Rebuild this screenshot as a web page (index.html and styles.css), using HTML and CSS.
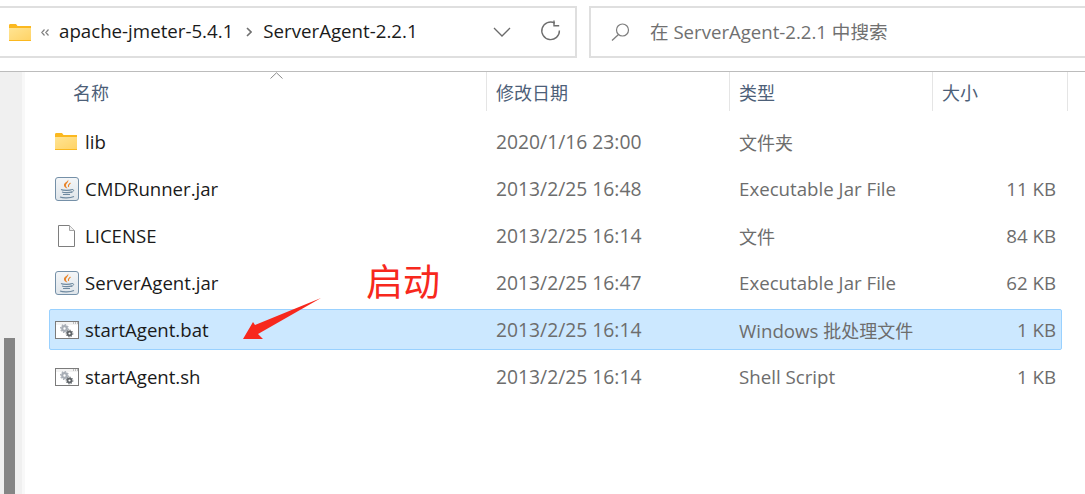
FILE: index.html
```html
<!DOCTYPE html>
<html>
<head>
    <title>ServerAgent-2.2.1</title>
    <link rel="stylesheet" href="styles.css">
</head>
<body>
    <svg class="defs" width="0" height="0">
        <defs>
            <linearGradient id="folder-fill" x1="0" y1="0" x2="1" y2="1">
                <stop offset="0" stop-color="#ffe493"/>
                <stop offset="1" stop-color="#ffd366"/>
            </linearGradient>
            <linearGradient id="jar-fill" x1="0" y1="0" x2="0" y2="1">
                <stop offset="0" stop-color="#f4f6f8"/>
                <stop offset="1" stop-color="#dfe5ea"/>
            </linearGradient>
            <symbol id="folder" viewBox="0 0 22 17">
                <path d="M0 1.500C0 .7.500 0 1.300 0H7l1.500 2H22v15H0z" fill="#fbb81f"/>
                <path d="M0 4h22v12H0z" fill="url(#folder-fill)"/>
            </symbol>
            <symbol id="jar" viewBox="0 0 24 24">
                <rect x=".5" y=".5" width="23" height="23" rx="2.500" fill="url(#jar-fill)" stroke="#7590a8"/>
                <path d="M13 2.500c1.500 2.500-2.500 4-2 6.500.2 1 1 1.700 1.500 2.500-2.200-.5-4-2-3.500-4 .5-2 4.200-2.800 4-5z" fill="#e8842a"/>
                <path d="M15.500 6c-1.200 1-2.800 1.800-2 4" fill="none" stroke="#e8842a" stroke-width="1.200"/>
                <path d="M6 12.500c2 1.200 9 1.200 11 0M7 15c2 .8 8 .8 10-.3M8 17.500h7M5 20c3 1.200 10 1.200 14-.5" fill="none" stroke="#6f8aa0" stroke-width="1.200"/>
                <path d="M17 12.500c2.200-.3 2.500 2-1 3" fill="none" stroke="#6f8aa0"/>
            </symbol>
            <symbol id="script" viewBox="0 0 24 18">
                <rect x=".5" y=".5" width="23" height="17" fill="#fff" stroke="#7b7b7b"/>
                <path d="M1 1h22v3H1z" fill="#f3f3f3"/>
                <path d="M18 2h1M20 2h1M22 2h1" stroke="#8a8a8a"/>
                <circle cx="9.500" cy="7.500" r="2.300" fill="none" stroke="#a7adb5" stroke-width="2.200"/>
                <circle cx="9.500" cy="7.500" r="3.900" fill="none" stroke="#a7adb5" stroke-width="1.200" stroke-dasharray="1.500 1.500"/>
                <circle cx="14.500" cy="12.500" r="2" fill="none" stroke="#5f6468" stroke-width="1.800"/>
                <circle cx="14.500" cy="12.500" r="3.400" fill="none" stroke="#5f6468" stroke-width="1" stroke-dasharray="1.300 1.300"/>
            </symbol>
        </defs>
    </svg>

    <div class="toolbar">
        <div class="address">
            <svg class="address-folder" width="22" height="17"><use href="#folder"/></svg>
            <svg class="crumb-more" width="8" height="7" viewBox="0 0 8 7">
                <path d="M3.500.5L.8 3.500l2.700 3M7.500.5L4.800 3.500l2.700 3" fill="none" stroke="#808080" stroke-width="1.200"/>
            </svg>
            <span class="crumb">apache-jmeter-5.4.1</span>
            <svg class="crumb-sep" width="6" height="10" viewBox="0 0 6 10">
                <path d="M1 1l4 4-4 4" fill="none" stroke="#707070" stroke-width="1.600"/>
            </svg>
            <span class="crumb">ServerAgent-2.2.1</span>
            <svg class="history" width="18" height="10" viewBox="0 0 18 10">
                <path d="M1 1l8 8 8-8" fill="none" stroke="#6a6a6a" stroke-width="1.300"/>
            </svg>
            <svg class="reload" width="21" height="21" viewBox="0 0 21 21">
                <path d="M14.800 3.100A8.800 8.800 0 1 0 19.400 10.500" fill="none" stroke="#6e6e6e" stroke-width="1.400"/>
                <path d="M14 .5v5.200h5.200" fill="none" stroke="#6e6e6e" stroke-width="1.400"/>
            </svg>
        </div>
        <div class="search">
            <svg class="search-icon" width="19" height="18" viewBox="0 0 19 18">
                <circle cx="11.500" cy="7" r="6" fill="none" stroke="#7d7d7d" stroke-width="1.200"/>
                <path d="M7.500 11.500L1 17.500" stroke="#7d7d7d" stroke-width="1.300"/>
            </svg>
            <span class="search-text">在 ServerAgent-2.2.1 中搜索</span>
        </div>
    </div>

    <div class="main">
        <div class="sidebar">
            <div class="scroll-thumb"></div>
        </div>
        <div class="content">
            <div class="columns">
                <div class="col col-name">名称
                    <svg class="sort" width="13" height="7" viewBox="0 0 13 7">
                        <path d="M.5 6.500L6.500.8l6 5.700" fill="none" stroke="#8a8a8a"/>
                    </svg>
                </div>
                <div class="col col-date">修改日期</div>
                <div class="col col-type">类型</div>
                <div class="col col-size">大小</div>
            </div>

            <div class="rows">
                <div class="row">
                    <div class="name"><svg class="icon icon-folder"><use href="#folder"/></svg>lib</div>
                    <div class="date">2020/1/16 23:00</div>
                    <div class="type"><span class="cjk">文件夹</span></div>
                    <div class="size"></div>
                </div>
                <div class="row">
                    <div class="name"><svg class="icon icon-jar"><use href="#jar"/></svg>CMDRunner.jar</div>
                    <div class="date">2013/2/25 16:48</div>
                    <div class="type">Executable Jar File</div>
                    <div class="size">11 KB</div>
                </div>
                <div class="row">
                    <div class="name">
                        <svg class="icon icon-file" viewBox="0 0 17 22">
                            <path d="M.5.500h11l5 5v16H.5z" fill="#fff" stroke="#7e7e7e"/>
                            <path d="M11.500.500v5h5" fill="#f1f1f1" stroke="#a5a5a5"/>
                        </svg>LICENSE
                    </div>
                    <div class="date">2013/2/25 16:14</div>
                    <div class="type"><span class="cjk">文件</span></div>
                    <div class="size">84 KB</div>
                </div>
                <div class="row">
                    <div class="name"><svg class="icon icon-jar"><use href="#jar"/></svg>ServerAgent.jar</div>
                    <div class="date">2013/2/25 16:47</div>
                    <div class="type">Executable Jar File</div>
                    <div class="size">62 KB</div>
                </div>
                <div class="row selected">
                    <div class="name"><svg class="icon icon-script"><use href="#script"/></svg>startAgent.bat</div>
                    <div class="date">2013/2/25 16:14</div>
                    <div class="type">Windows <span class="cjk">批处理文件</span></div>
                    <div class="size">1 KB</div>
                </div>
                <div class="row">
                    <div class="name"><svg class="icon icon-script"><use href="#script"/></svg>startAgent.sh</div>
                    <div class="date">2013/2/25 16:14</div>
                    <div class="type">Shell Script</div>
                    <div class="size">1 KB</div>
                </div>
            </div>
        </div>
    </div>

    <!-- red note drawn on top of the screenshot -->
    <div class="note">启动</div>
    <svg class="note-arrow" width="80" height="44" viewBox="0 0 80 44">
        <path d="M1 42L11 25l2 3L79 1 16 37l5 5z" fill="#f7281d"/>
    </svg>
</body>
</html>
```

FILE: styles.css
```css
/* Basic page */
html, body {
    margin: 0;
    height: 100%;
}

body {
    position: relative;
    width: 1085px;
    height: 494px;
    overflow: hidden;
    background: #fff;
    font-family: "Open Sans", "Noto Sans CJK SC", sans-serif;
    color: #1a1a1a;
}

.defs {
    position: absolute;
}

/* Address bar and search */
.toolbar {
    display: flex;
    gap: 12px;
    height: 72px;
    padding-top: 6px;
    box-sizing: border-box;
    border-bottom: 1px solid #bcbcbc;
}

.address, .search {
    display: flex;
    align-items: center;
    height: 52px;
    box-sizing: border-box;
    border: 2px solid #dfdfdf;
}

.address {
    width: 577px;
    padding-left: 9px;
    border-left: 0;
}

.search {
    flex: 1;
    padding-left: 20px;
    border-right: 0;
}

.address-folder {
    margin-right: 10px;
}

.crumb-more {
    margin-right: 10px;
}

.crumb {
    font-size: 18.7px;
    line-height: 24px;
    margin-top: -3px;
    white-space: nowrap;
}

.crumb-sep {
    margin: 0 11px 0 13px;
}

.history {
    margin-left: 75px;
}

.reload {
    margin-left: 29px;
    margin-top: -3px;
}

.search-icon {
    margin-right: 20px;
}

.search-text {
    font-size: 18.6px;
    line-height: 24px;
    color: #707070;
}

/* Left stripe with scrollbar */
.main {
    display: flex;
    height: 422px;
}

.sidebar {
    width: 18px;
    padding-left: 4px;
    background: #f0f0f0;
    border-right: 3px solid #f8f8f8;
}

.scroll-thumb {
    width: 11px;
    height: 156px;
    margin-top: 266px;
    background: #858585;
}

.content {
    flex: 1;
}

/* Column headers */
.columns {
    display: grid;
    grid-template-columns: 462px 243px 203px 135px;
    height: 39px;
}

.col {
    position: relative;
    padding: 8px 0 0 9px;
    font-size: 18px;
    line-height: 26px;
    color: #4d6078;
    box-sizing: border-box;
    border-right: 1px solid #e5e5e5;
}

.col-name {
    padding-left: 48px;
}

.sort {
    position: absolute;
    left: 245px;
    top: 0;
}

/* File rows */
.rows {
    display: flex;
    flex-direction: column;
    gap: 6px;
    padding: 10px 23px 0 24px;
}

.row {
    display: grid;
    grid-template-columns: 437px 243px 203px 119px;
    align-items: center;
    height: 41px;
    box-sizing: border-box;
    border: 1px solid transparent;
    border-radius: 2px;
    font-size: 18.7px;
}

.row.selected {
    background: #cce8ff;
    border-color: #99d1ff;
}

.name {
    display: flex;
    align-items: center;
    font-size: 18.6px;
}

.icon {
    flex: none;
    margin-right: 6px;
}

.icon-folder {
    width: 22px;
    height: 17px;
    margin-left: 5px;
    margin-right: 8px;
}

.icon-jar {
    width: 24px;
    height: 24px;
    margin-left: 5px;
}

.icon-file {
    width: 17px;
    height: 22px;
    margin-left: 8px;
    margin-right: 10px;
}

.icon-script {
    width: 24px;
    height: 18px;
    margin-left: 5px;
}

.date, .type {
    padding-left: 9px;
    color: #6d6d6d;
}

.date {
    font-size: 19.3px;
}

.cjk {
    font-size: 18px;
}

.size {
    margin-right: -4px;
    text-align: right;
    color: #6d6d6d;
}

/* Annotation */
.note {
    position: absolute;
    left: 366px;
    top: 258px;
    font-size: 37px;
    line-height: 48px;
    color: #f7281d;
}

.note-arrow {
    position: absolute;
    left: 242px;
    top: 297px;
}
```
